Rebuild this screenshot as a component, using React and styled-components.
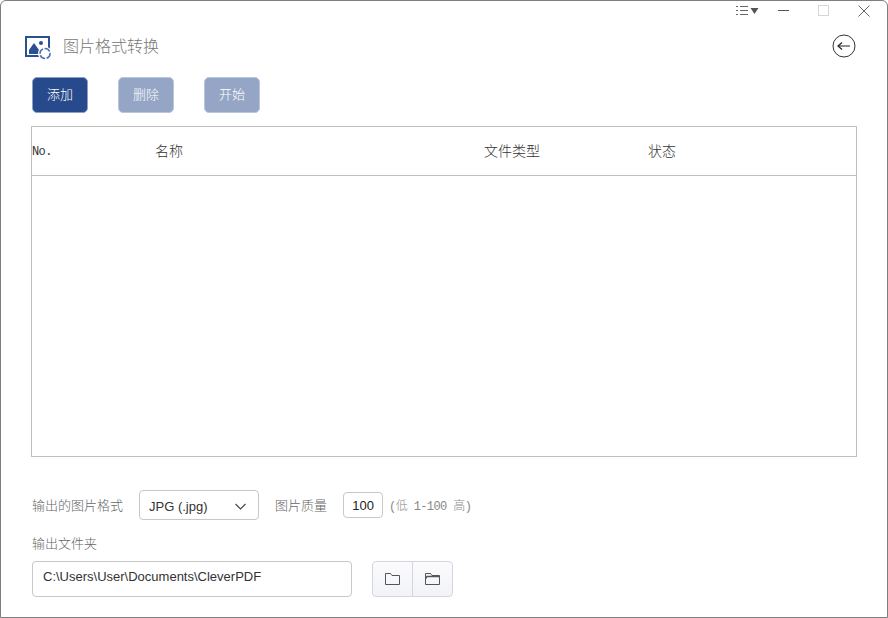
import React from "react";
import styled, { createGlobalStyle } from "styled-components";

const GlobalStyle = createGlobalStyle`
  html, body {
    margin: 0;
    padding: 0;
    background: #fff;
  }
  * {
    box-sizing: border-box;
  }
`;

const cjk = `"Noto Sans CJK SC", "Liberation Sans", sans-serif`;

const Window = styled.div`
  width: 888px;
  height: 618px;
  display: flex;
  flex-direction: column;
  background: #fff;
  border: 1px solid #7f7f7f;
  border-radius: 6px 6px 0 0;
  font-family: ${cjk};
  overflow: hidden;
`;

const TitleBar = styled.div`
  height: 19px;
  display: flex;
  justify-content: flex-end;
  align-items: center;
  padding-right: 3px;
`;

const WinButton = styled.div`
  width: ${(p) => p.$w || 40}px;
  height: 19px;
  display: flex;
  align-items: center;
  justify-content: center;
`;

const Header = styled.div`
  height: 33px;
  margin-top: 9px;
  display: flex;
  align-items: center;
  padding: 0 31px 0 24px;
`;

const IconWrap = styled.div`
  display: flex;
  margin-top: 5px;
`;

const AppTitle = styled.div`
  margin: 0 0 2px 11px;
  font-size: 16px;
  font-weight: 300;
  color: #77787b;
  flex: 1;
`;

const Toolbar = styled.div`
  display: flex;
  gap: 30px;
  margin: 15px 0 0 31px;
`;

const ActionButton = styled.button`
  width: 56px;
  height: 36px;
  padding: 0 0 3px;
  border-radius: 5px;
  border: 1px solid ${(p) => (p.disabled ? "#b9c5dc" : "#8ca0c6")};
  background: ${(p) => (p.disabled ? "#95a5c5" : "#274a8c")};
  color: #fff;
  font-family: ${cjk};
  font-size: 13px;
  font-weight: 300;
`;

const Table = styled.div`
  margin: 13px 0 0 30px;
  width: 826px;
  height: 331px;
  border: 1px solid #c0c0c0;
`;

const TableHead = styled.div`
  height: 49px;
  padding-bottom: 2px;
  display: grid;
  grid-template-columns: 123px 329px 164px 1fr;
  align-items: center;
  border-bottom: 1px solid #c0c0c0;
  font-size: 14px;
  font-weight: 300;
  color: #333;
`;

const NoCell = styled.span`
  margin-top: 4px;
  font-family: "Liberation Mono", monospace;
  font-size: 12px;
  letter-spacing: -0.6px;
  color: #333;
`;

const Options = styled.div`
  display: flex;
  align-items: center;
  margin: 33px 0 0 31px;
  height: 30px;
`;

const Label = styled.span`
  margin-bottom: 2px;
  font-size: 13px;
  font-weight: 300;
  color: #666;
`;

const SelectBox = styled.div`
  width: 120px;
  height: 30px;
  margin: 0 16px;
  padding: 3px 12px 0 9px;
  display: flex;
  align-items: center;
  justify-content: space-between;
  border: 1px solid #c8c8c8;
  border-radius: 4px;
  font-family: "Liberation Sans", sans-serif;
  font-size: 13px;
  color: #333;
`;

const QualityInput = styled.div`
  width: 40px;
  height: 26px;
  margin: 0 6px 0 16px;
  padding-top: 1px;
  display: flex;
  align-items: center;
  justify-content: center;
  border: 1px solid #c8c8c8;
  border-radius: 4px;
  font-family: "Liberation Sans", sans-serif;
  font-size: 13px;
  color: #222;
`;

const Hint = styled.span`
  font-family: "Liberation Mono", "Noto Sans CJK SC", monospace;
  font-size: 12px;
  font-weight: 300;
  letter-spacing: -0.6px;
  color: #888;
`;

const FolderLabel = styled.div`
  margin: 13px 0 0 31px;
  height: 20px;
  display: flex;
  align-items: center;
`;

const FolderRow = styled.div`
  display: flex;
  margin: 8px 0 0 31px;
  gap: 20px;
`;

const PathInput = styled.div`
  width: 320px;
  height: 36px;
  padding: 0 10px 5px;
  display: flex;
  align-items: center;
  border: 1px solid #c8c8c8;
  border-radius: 4px;
  font-family: "Liberation Sans", sans-serif;
  font-size: 13px;
  color: #333;
`;

const ButtonGroup = styled.div`
  width: 81px;
  height: 36px;
  display: flex;
  border: 1px solid #d5d5e0;
  border-radius: 4px;
  background: linear-gradient(#fbfbfd, #f2f3f7);
`;

const GroupButton = styled.div`
  flex: 1;
  padding-bottom: 1px;
  display: flex;
  align-items: center;
  justify-content: center;
  & + & {
    border-left: 1px solid #d5d5e0;
  }
`;

function AppIcon() {
  return (
    <svg width="27" height="24" viewBox="0 0 27 24">
      <rect x="1" y="1" width="23" height="19" fill="#fff" stroke="#2a4f92" strokeWidth="2" />
      <path d="M4 18v-4l5-7 5 7v4z" fill="#2a4f92" />
      <circle cx="16" cy="7" r="2" fill="#2a4f92" />
      <circle cx="20" cy="17.500" r="7" fill="#fff" />
      <circle cx="20" cy="17.500" r="5" fill="none" stroke="#4a70ad" strokeWidth="1.600" strokeDasharray="6 1.500" />
    </svg>
  );
}

function MenuIcon() {
  return (
    <svg width="24" height="11" viewBox="0 0 24 11">
      <path d="M0 1.500h2M4 1.500h8M0 5.500h2M4 5.500h8M0 9.500h2M4 9.500h8" stroke="#666" strokeWidth="1" />
      <path d="M14.500 3h8l-4 6z" fill="#555" />
    </svg>
  );
}

function BackIcon() {
  return (
    <svg width="24" height="24" viewBox="0 0 24 24">
      <circle cx="12" cy="12" r="11" fill="none" stroke="#333" strokeWidth="1" />
      <path d="M6 12h12" stroke="#222" strokeWidth="1.200" />
      <path d="M10 8.500L6 12l4 3.500" fill="none" stroke="#222" strokeWidth="1.200" />
    </svg>
  );
}

function FolderIcon() {
  return (
    <svg width="15" height="13" viewBox="0 0 15 13">
      <path d="M.5 12.500V1.500h5l1.500 2h7.500v9z" fill="none" stroke="#555" strokeWidth="1" />
    </svg>
  );
}

function FolderOpenIcon() {
  return (
    <svg width="15" height="13" viewBox="0 0 15 13">
      <path d="M.5 12.500V1.500h5l1.500 2h7.500v9z" fill="none" stroke="#555" strokeWidth="1" />
      <path d="M.5 6.500L2 4.500h12.500" fill="none" stroke="#555" strokeWidth="1.500" />
    </svg>
  );
}

export default function App() {
  return (
    <Window>
      <GlobalStyle />
      <TitleBar>
        <WinButton $w={30}>
          <MenuIcon />
        </WinButton>
        <WinButton $w={40}>
          <svg width="11" height="3" viewBox="0 0 11 3">
            <path d="M0 1.500h11" stroke="#555" strokeWidth="1" />
          </svg>
        </WinButton>
        <WinButton $w={40}>
          <svg width="11" height="11" viewBox="0 0 11 11">
            <rect x=".5" y=".5" width="10" height="10" fill="none" stroke="#d6d6d6" />
          </svg>
        </WinButton>
        <WinButton $w={41}>
          <svg width="12" height="12" viewBox="0 0 12 12">
            <path d="M.5.500l11 11M11.500.500l-11 11" stroke="#666" strokeWidth="1" />
          </svg>
        </WinButton>
      </TitleBar>
      <Header>
        <IconWrap>
          <AppIcon />
        </IconWrap>
        <AppTitle>图片格式转换</AppTitle>
        <BackIcon />
      </Header>
      <Toolbar>
        <ActionButton>添加</ActionButton>
        <ActionButton disabled>删除</ActionButton>
        <ActionButton disabled>开始</ActionButton>
      </Toolbar>
      <Table>
        <TableHead>
          <NoCell>No.</NoCell>
          <span>名称</span>
          <span>文件类型</span>
          <span>状态</span>
        </TableHead>
      </Table>
      <Options>
        <Label>输出的图片格式</Label>
        <SelectBox>
          JPG (.jpg)
          <svg width="11" height="7" viewBox="0 0 11 7">
            <path d="M.5 1l5 5 5-5" fill="none" stroke="#444" strokeWidth="1.100" />
          </svg>
        </SelectBox>
        <Label>图片质量</Label>
        <QualityInput>100</QualityInput>
        <Hint>(低 1-100 高)</Hint>
      </Options>
      <FolderLabel>
        <Label>输出文件夹</Label>
      </FolderLabel>
      <FolderRow>
        <PathInput>C:\Users\User\Documents\CleverPDF</PathInput>
        <ButtonGroup>
          <GroupButton>
            <FolderIcon />
          </GroupButton>
          <GroupButton>
            <FolderOpenIcon />
          </GroupButton>
        </ButtonGroup>
      </FolderRow>
    </Window>
  );
}
